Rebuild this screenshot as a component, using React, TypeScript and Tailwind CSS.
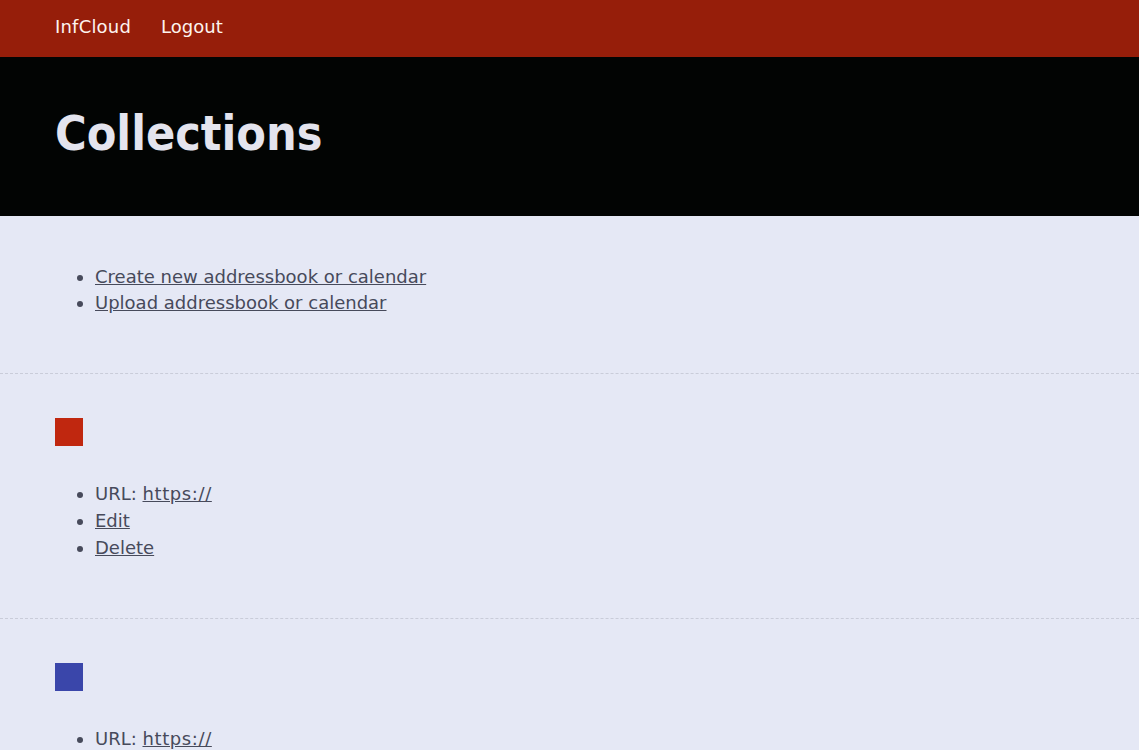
import React from "react";

const Section = ({ color }: { color: string }) => (
  <section className="border-t border-dashed border-[#c9ccd9] px-[55px] pt-[44px] pb-[57px]">
    <div className={`w-[28px] h-[28px] ${color}`} />
    <ul className="list-disc pl-[40px] mt-[34px] leading-[27px]">
      <li>
        URL: <a href="#" className="underline tracking-[0.6px]">https://</a>
      </li>
      <li>
        <a href="#" className="underline">Edit</a>
      </li>
      <li>
        <a href="#" className="underline">Delete</a>
      </li>
    </ul>
  </section>
);

export default function App() {
  return (
    <div
      className="min-h-[750px] bg-[#e5e8f5] text-[18px] text-[#474a5b]"
      style={{ fontFamily: '"DejaVu Sans", sans-serif' }}
    >
      <nav className="h-[57px] bg-[#961e0a] flex items-center px-[55px] gap-[30px] text-[#fdf3ee] pb-[5px]">
        <a href="#" className="tracking-[0.2px]">InfCloud</a>
        <a href="#">Logout</a>
      </nav>
      <header className="h-[159px] bg-[#020403] flex items-center px-[55px] pb-[8px]">
        <h1
          className="text-[48px] font-bold text-[#e4e4ee]"
          style={{ fontFamily: '"DejaVu Sans Condensed", "DejaVu Sans", sans-serif', fontStretch: "condensed" }}
        >
          Collections
        </h1>
      </header>
      <section className="px-[55px] pt-[48px] pb-[57px]">
        <ul className="list-disc pl-[40px] leading-[26px]">
          <li>
            <a href="#" className="underline">Create new addressbook or calendar</a>
          </li>
          <li>
            <a href="#" className="underline">Upload addressbook or calendar</a>
          </li>
        </ul>
      </section>
      <Section color="bg-[#c0270f]" />
      <Section color="bg-[#3a46aa]" />
    </div>
  );
}
